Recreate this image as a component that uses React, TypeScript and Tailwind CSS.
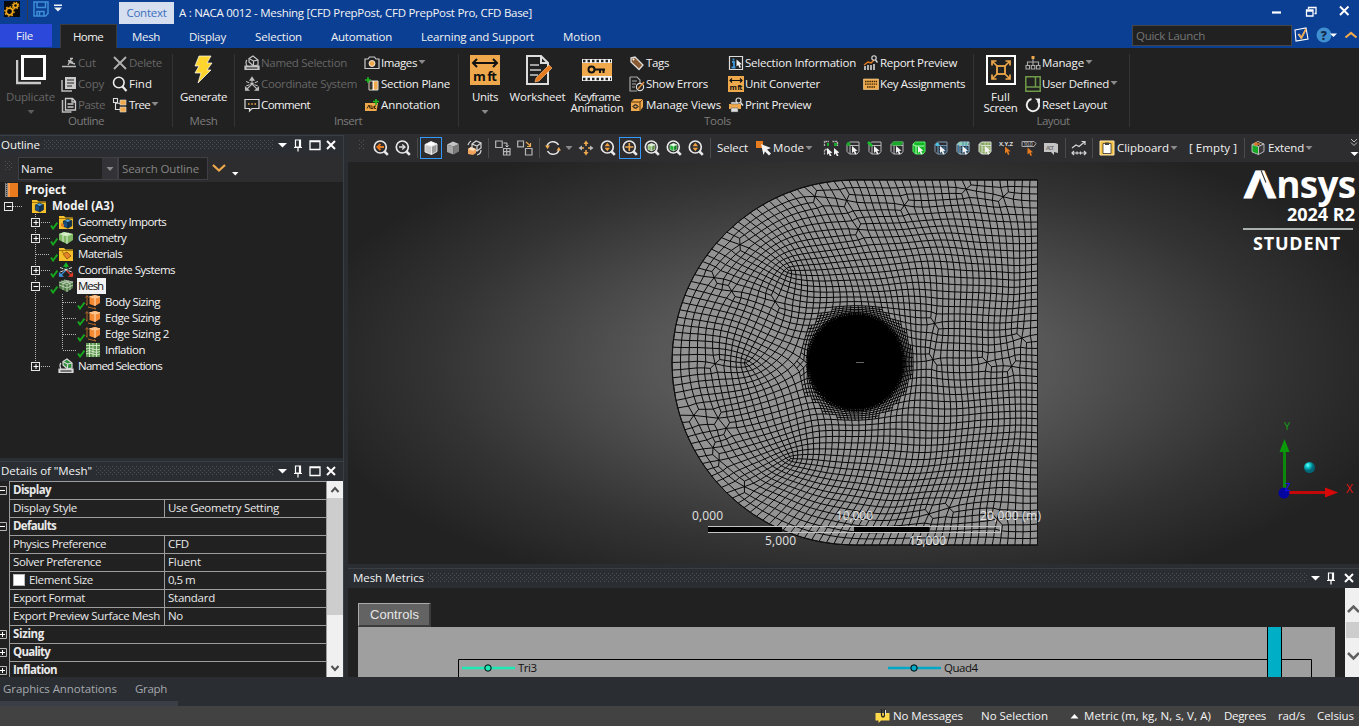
import { useLayoutEffect, useRef, useState, type ReactNode } from "react";

/* ---------- text that is tracked to a given advance width ---------- */
function T({ w, children, className = "" }: { w: number; children: string; className?: string }) {
  const ref = useRef<HTMLSpanElement>(null);
  const [track, setTrack] = useState(0);
  useLayoutEffect(() => {
    const el = ref.current;
    if (!el) return;
    el.style.letterSpacing = "0px";
    const natural = el.getBoundingClientRect().width;
    const next = (w - natural) / children.length;
    el.style.letterSpacing = `${next}px`;
    setTrack(next);
  }, [w, children]);
  return (
    <span ref={ref} className={`inline-block shrink-0 whitespace-nowrap ${className}`} style={{ letterSpacing: `${track}px` }}>
      {children}
    </span>
  );
}

function Ico({ children, size = 16, className = "" }: { children: ReactNode; size?: number; className?: string }) {
  return (
    <svg width={size} height={size} viewBox="0 0 16 16" fill="none" className={`shrink-0 ${className}`}>
      {children}
    </svg>
  );
}

const Caret = ({ className = "", color = "#8a8a8a" }: { className?: string; color?: string }) => (
  <svg width="8" height="4" viewBox="0 0 8 4" className={`shrink-0 ${className}`}>
    <path d="M0.5 0h7L4 4z" fill={color} />
  </svg>
);

function Grip({ className = "" }: { className?: string }) {
  return (
    <svg className={className} height="9" width="100%">
      <defs>
        <pattern id="grip-dots" width="4" height="4" patternUnits="userSpaceOnUse">
          <rect width="1" height="1" fill="#4d5258" />
          <rect x="2" y="2" width="1" height="1" fill="#4d5258" />
        </pattern>
      </defs>
      <rect width="100%" height="9" fill="url(#grip-dots)" />
    </svg>
  );
}

/* ---------- icons ---------- */
const Cube = ({ t, l, r, s = "none" }: { t: string; l: string; r: string; s?: string }) => (
  <g stroke={s} strokeWidth="0.9" strokeLinejoin="round">
    <path d="M8 1.500 14 4 8.500 6.500 2 4.500z" fill={t} />
    <path d="M2 4.500 8.500 6.500V14.500L2 12z" fill={l} />
    <path d="M8.500 6.500 14 4V11.500L8.500 14.500z" fill={r} />
  </g>
);
const Mag = ({ children }: { children?: ReactNode }) => (
  <g>
    <circle cx="7.300" cy="7" r="6" stroke="#e8e8e8" strokeWidth="1.700" />
    <path d="m11.500 11.500 3.300 3.300" stroke="#e8e8e8" strokeWidth="2.600" />
    {children}
  </g>
);
const Pointer = ({ x = 8, y = 7, c = "#f2f2f2" }: { x?: number; y?: number; c?: string }) => (
  <path transform={`translate(${x} ${y})`} d="M0 0v7l1.700-1.500 1.300 3 1.500-.7-1.300-2.800 2.300-.2z" fill={c} />
);
const OpenBox = ({ s = "#b8b8b8" }: { s?: string }) => (
  <path d="M2 4.500 4.500 2H14v9.500L12 14H4.500L2 11.500zM2 4.500l3 1h9M5 5.500V14" stroke={s} strokeWidth="1" />
);
const Updown = () => <path d="M7.300 2.800 10 6.200H4.600zM7.300 11.200 10 7.800H4.600z" fill="#f0a040" />;

const NamedSel = ({ c = "none" }: { c?: string }) => (
  <g stroke="#d8d8d8" strokeWidth="1.200">
    <path d="M5 3.500 9 1l5 4v5L9.500 11 5 7z" fill={c} />
    <path d="M5 3.500 9.500 6v5M9.500 6 14 5M3 5C1 7 2 9 3 11" />
    <path d="M1 11h14v3.500H1z" fill="#d8d8d8" />
    <path d="M2.500 13h11" stroke="#333" />
  </g>
);
const Folder = ({ children }: { children?: ReactNode }) => (
  <g>
    <path d="M1 2h5l1.500 1.500H15V15H1z" fill="#f5c02c" />
    <path d="M1 4.500h14" stroke="#8a6500" strokeWidth=".8" />
    {children}
  </g>
);
const Star = ({ colors }: { colors: [string, string, string] }) => (
  <g strokeWidth="1.100">
    <path d="M8 7.500V3M6 4.200 8 1.200l2 3z" stroke={colors[0]} fill={colors[0]} />
    <path d="M8 8 3.500 12.500M1.500 11.200V14.300h3.200z" stroke={colors[1]} fill={colors[1]} />
    <path d="M8 8l4.500 4.500M14.500 11.200V14.300h-3.200z" stroke={colors[2]} fill={colors[2]} />
    <path d="M2 5.500 14 10M14 5.500 2 10" stroke="#ddd" strokeWidth="1" strokeDasharray="3.500 1" />
  </g>
);
const SizingIcon = () => (
  <g>
    <path d="M4.500 2.500 10 1l5 1.500V9l-5 3-5.500-2z" fill="#f58a35" />
    <path d="M4.500 2.500 10 4l5-1.500M10 4v8" stroke="#ffe0c0" strokeWidth="1" />
    <path d="M4.500 2.500 10 1l5 1.500L10 4z" fill="#ffc38a" />
    <path d="M2 2v9M.5 3.500 2 1.500l1.500 2M1 9.500l1 2M3 13l8 2M9 13.500l2 1.500" stroke="#b5672a" strokeWidth="1" />
  </g>
);

/* ---------- ribbon ---------- */
function Small({ icon, w, dim, caret, children }: { icon: ReactNode; w: number; dim?: boolean; caret?: boolean; children: string }) {
  return (
    <div className="flex h-[21px] items-center">
      <Ico className={dim ? "mr-px opacity-90" : "mr-px"}>{icon}</Ico>
      <T w={w} className={dim ? "text-[#666]" : "text-[#f1f1f1]"}>{children}</T>
      {caret && <Caret className="-mt-0.5 ml-px" />}
    </div>
  );
}
function Group({ label, lw, className, shift = "", children }: { label: string; lw: number; className: string; shift?: string; children: ReactNode }) {
  return (
    <div className={`flex h-[86px] shrink-0 flex-col pt-1 ${className}`}>
      <div className="flex h-[63px]">{children}</div>
      <div className={`flex h-3 items-center justify-center text-[#7c7c7c] ${shift}`}><T w={lw}>{label}</T></div>
    </div>
  );
}
const Sep = () => <div className="mt-1.5 h-[73px] w-px shrink-0 bg-[#343434]" />;

function Big({ icon, className, children }: { icon: ReactNode; className: string; children: ReactNode }) {
  return (
    <div className={`flex shrink-0 flex-col items-center pt-[3px] leading-[11px] ${className}`}>
      <svg width="30" height="30" viewBox="0 0 30 30" fill="none" className="mb-1.5">{icon}</svg>
      {children}
    </div>
  );
}

function Ribbon() {
  return (
    <div className="flex h-[86px] shrink-0 bg-[#212121]">
      <Group label="Outline" lw={36} className="w-[172px]">
        <Big className="w-[61px] text-[#666]" icon={<><path d="M1 5v23h24" stroke="#c9c9c9" strokeWidth="2.500" /><rect x="6.500" y="1.500" width="22" height="22" stroke="#fff" strokeWidth="3" fill="#212121" /></>}>
          <T w={49}>Duplicate</T><Caret className="mt-2" color="#5c5c5c" />
        </Big>
        <div className="w-[51px]">
          <Small dim w={18} icon={<path d="M1 11.500h14M7 10 11 3m-3.500 4L14 9M7 5.500l5 2M9 3.500h3" stroke="#ccc" strokeWidth="1.400" />}>Cut</Small>
          <Small dim w={26} icon={<><path d="M1 4v11h10" stroke="#ccc" strokeWidth="1.500" /><path d="M4 1h11v12H4z" fill="#ddd" /><path d="M6 4h7M6 7h7M6 10h5" stroke="#222" /></>}>Copy</Small>
          <Small dim w={27} icon={<><path d="M1.500 3v12h9" stroke="#ccc" strokeWidth="1.500" /><path d="M4.500 1.500h7l3 3v8.500h-10zM11 2v3h3M6.500 7h6M6.500 10h6" stroke="#ddd" strokeWidth="1.300" /></>}>Paste</Small>
        </div>
        <div>
          <Small dim w={33} icon={<path d="m2 2 12 12M14 2 2 14" stroke="#c0c0c0" strokeWidth="1.900" />}>Delete</Small>
          <Small w={23} icon={<><circle cx="6.800" cy="6.500" r="5.300" stroke="#eee" strokeWidth="1.600" /><path d="m10.500 10.500 4 4.500" stroke="#eee" strokeWidth="2.200" /></>}>Find</Small>
          <Small w={21} caret icon={<><path d="M1.500 1.500h4v4h-4zM3.500 6v6.500H8M3.500 6 9 6.500" stroke="#ddd" strokeWidth="1.100" /><path d="M8 3h6v5H8zM8 10h6v5H8z" fill="#efa94c" stroke="#ddd" strokeWidth=".6" /></>}>Tree</Small>
        </div>
      </Group>
      <Sep />
      <Group label="Mesh" lw={28} className="w-[61px]">
        <Big className="w-[61px] text-[#f1f1f1]" icon={<path d="M10 1h12l-4 7h5l-5 7h4L9 28l3-10H6l4-7H6z" fill="#ffd52e" stroke="#fff" strokeWidth=".7" />}>
          <T w={47}>Generate</T>
        </Big>
      </Group>
      <Sep />
      <Group label="Insert" lw={28} className="w-[223px]" shift="pl-[3px]">
        <div className="ml-[9px] w-[120px]">
          <Small dim w={86} icon={<NamedSel />}>Named Selection</Small>
          <Small dim w={96} icon={<Star colors={["#ccc", "#ccc", "#ccc"]} />}>Coordinate System</Small>
          <Small w={49} icon={<><path d="M1 2.500h14v9H8L5.500 14v-2.500H1z" stroke="#ddd" strokeWidth="1.200" /><path d="M4 7h1.500M7.300 7h1.500M10.500 7H12" stroke="#efa94c" strokeWidth="1.500" /></>}>Comment</Small>
        </div>
        <div>
          <Small w={36} caret icon={<><path d="M1 4h3l1.500-2h5L12 4h3v9.500H1z" stroke="#ccc" strokeWidth="1.200" /><circle cx="8" cy="8.500" r="3" fill="#efa94c" stroke="#fff" strokeWidth=".8" /></>}>Images</Small>
          <Small w={69} icon={<><path d="M5 5h9v9H5z" fill="#efa94c" stroke="#ddd" /><path d="M9 5v9" stroke="#fff" strokeWidth="1.500" /><path d="M5.500 5.500h3v8h-3z" fill="#333" /><path d="M4 1v6M1 4h6" stroke="#1fbb1f" strokeWidth="1.500" /></>}>Section Plane</Small>
          <Small w={59} icon={<><path d="M1 6h13l-1.500 8H1z" fill="#efa94c" /><path d="M12 2v6M9 4.500h6" stroke="#1fbb1f" strokeWidth="1.600" /><path d="M3 11.500 5 8l1 3.500M7 8v3.500h2V9M12 9h-1.500v2.500H12" stroke="#3a2405" strokeWidth="1" /></>}>Annotation</Small>
        </div>
      </Group>
      <Sep />
      <Group label="Tools" lw={27} className="w-[514px]" shift="pl-[3px]">
        <Big className="w-[52px] text-[#f1f1f1]" icon={<><path d="M0 0h30v30H0z" fill="#efa94c" /><path d="M3 8h24M7 4 3 8l4 4M23 4l4 4-4 4" stroke="#111" strokeWidth="2" /><text x="3" y="26" fontSize="13" fontWeight="700" fill="#111" textLength="24">m ft</text></>}>
          <T w={26}>Units</T><Caret className="mt-2" />
        </Big>
        <Big className="w-[53px] text-[#f1f1f1]" icon={<><path d="M4 1h14l7 7v21H4zM18 1v7h7" stroke="#ddd" strokeWidth="2" /><path d="M7 10h9M7 15h11M7 20h8" stroke="#ccc" strokeWidth="1.500" /><path d="m12 27 1-4L26 10l3 3-13 13z" fill="#e67b20" stroke="#ffc48a" strokeWidth=".6" /></>}>
          <T w={56}>Worksheet</T>
        </Big>
        <Big className="w-[66px] text-[#f1f1f1]" icon={<><path d="M0 4h30v22H0z" fill="#f4f4f4" /><path d="M0 8h30v13H0z" fill="#efa94c" /><path d="M1 6h28M1 24h28" stroke="#212121" strokeWidth="2.500" strokeDasharray="2.500 2" /><circle cx="9.500" cy="14.500" r="3" stroke="#111" strokeWidth="2" /><path d="M12 14.500h11M18 14.500V18M21.500 14.500V18" stroke="#111" strokeWidth="2" /></>}>
          <T w={46}>Keyframe</T><T w={53}>Animation</T>
        </Big>
        <div className="-ml-px w-[99px]">
          <Small w={23} icon={<><path d="m2 3 4-1 8 8-4 4.500L2 7z" fill="#8a5a30" stroke="#ddd" strokeWidth="1.300" /><circle cx="4.500" cy="4.500" r="1" fill="#fff" /></>}>Tags</Small>
          <Small w={62} icon={<><path d="M1 1h7l3 3v3M1 1v14h7M3 5h5M3 8h4M3 11h3" stroke="#aaa" strokeWidth="1.200" /><circle cx="11" cy="11" r="3.600" stroke="#ddd" strokeWidth="1.200" /><path d="m9 13 6-7" stroke="#d98a3a" strokeWidth="1.500" /></>}>Show Errors</Small>
          <Small w={75} icon={<><path d="M2 5 5 2h9v8l-3 4H2z" fill="#efa94c" /><path d="M2 5h9v9M11 5l3-3" stroke="#5b3408" /><circle cx="6.500" cy="9.500" r="1.600" stroke="#222" /><path d="M3.500 9.500q3-3.500 6 0-3 3.500-6 0z" stroke="#222" strokeWidth=".8" /></>}>Manage Views</Small>
        </div>
        <div className="w-[135px]">
          <Small w={111} icon={<><path d="M1.500 1.500h13v13h-13z" stroke="#ddd" strokeWidth="1.200" /><path d="M5.500 3.500v2M4 7h2v5M3.500 12.500h4" stroke="#3f95d8" strokeWidth="1.800" /><Pointer x={8.500} y={4.500} /></>}>Selection Information</Small>
          <Small w={75} icon={<><path d="M0 0h16v16H0z" fill="#efa94c" /><path d="M2 4.500h12M4 2.500l-2 2 2 2M12 2.500l2 2-2 2" stroke="#111" strokeWidth="1.200" /><text x="1.500" y="14" fontSize="7.500" fontWeight="700" fill="#111" textLength="13">m ft</text></>}>Unit Converter</Small>
          <Small w={66} icon={<><path d="M1 7h12v5H1z" fill="#efa94c" /><path d="M3 5h7v2H3zM3 11h7v4H3z" fill="#ddd" stroke="#555" strokeWidth=".5" /><circle cx="10.500" cy="3.500" r="2.500" stroke="#ddd" strokeWidth="1.200" /><path d="m12.500 5.500 2.500 3" stroke="#ddd" strokeWidth="1.500" /></>}>Print Preview</Small>
        </div>
        <div>
          <Small w={77} icon={<><path d="M2 15v-4M5 15v-5M8 15v-5M11 15V9" stroke="#ccc" strokeWidth="1.700" /><path d="m1 10 4-3 3 1 3-3" stroke="#e67b20" strokeWidth="1.400" /><circle cx="11" cy="3" r="2.200" stroke="#ddd" strokeWidth="1.100" /><path d="m12.500 5 2 2.500" stroke="#ddd" strokeWidth="1.300" /></>}>Report Preview</Small>
          <Small w={85} icon={<><path d="M.5 3h15v10.500H.5z" fill="#efa94c" stroke="#ffd79a" strokeWidth=".6" /><path d="M2 5.500h12M2 8.200h12M4 11h8" stroke="#3a2405" strokeWidth="1.300" strokeDasharray="1.500 .7" /></>}>Key Assignments</Small>
        </div>
      </Group>
      <Sep />
      <Group label="Layout" lw={33} className="w-[155px]" shift="pl-[3px]">
        <Big className="ml-px w-[51px] text-[#f1f1f1]" icon={<><rect x="1" y="1" width="28" height="28" stroke="#fff" strokeWidth="2" /><rect x="11" y="11" width="8" height="8" stroke="#efa94c" strokeWidth="1.800" /><path d="m11 11-4-4M19 11l4-4M11 19l-4 4M19 19l4 4M6 10.500V6h4.500M19.500 6H24v4.500M6 19.500V24h4.500M19.500 24H24v-4.500" stroke="#efa94c" strokeWidth="1.700" /></>}>
          <T w={19}>Full</T><T w={34}>Screen</T>
        </Big>
        <div className="-ml-px">
          <Small w={42} caret icon={<><path d="M6.500 1h3v3h-3z" fill="#efa94c" /><path d="M8 4v6M2.500 10V7h11v3M1 10.500h3.500V14H1zM6.300 10.500h3.500V14H6.300zM11.500 10.500H15V14h-3.500z" stroke="#aaa" strokeWidth="1.100" /></>}>Manage</Small>
          <Small w={67} caret icon={<path d="M.8.8h14.400v14.400H.8zM.8 11h14.400M10.500.8V11" stroke="#6f9a48" strokeWidth="1.500" />}>User Defined</Small>
          <Small w={65} icon={<><path d="M6.500 2A6.200 6.200 0 1 0 12.700 4" stroke="#eee" strokeWidth="1.900" /><path d="M10 1.500h5v5z" fill="#eee" /></>}>Reset Layout</Small>
        </div>
      </Group>
      <Sep />
    </div>
  );
}

/* ---------- title and tab bars ---------- */
function TitleBar() {
  return (
    <div className="shrink-0 bg-[#0b3f94]">
      <div className="flex h-6 items-start">
        <svg width="16" height="16" viewBox="0 0 16 16" fill="none" className="ml-1 mt-px">
          <path d="M0 0h16v16H0z" fill="#0a0a0a" />
          <circle cx="5.500" cy="10.500" r="3.300" stroke="#eda81c" strokeWidth="1.800" /><circle cx="5.500" cy="10.500" r="4.700" stroke="#eda81c" strokeWidth="1.300" strokeDasharray="1.700 1.900" />
          <circle cx="11.500" cy="4.500" r="2.100" stroke="#eda81c" strokeWidth="1.500" /><circle cx="11.500" cy="4.500" r="3.300" stroke="#eda81c" strokeWidth="1.100" strokeDasharray="1.300 1.300" />
        </svg>
        <div className="ml-[7px] h-[21px] w-px bg-[#333a4c]" />
        <svg width="16" height="16" viewBox="0 0 16 16" fill="none" className="ml-[5px] mt-px">
          <path d="M1 1h14v11.500L12.500 15H1zM4 1v5.500h8.500V1M4 15v-4.500h7V15M6.500 11v4" stroke="#3f8fd6" strokeWidth="1.500" />
        </svg>
        <svg width="8" height="8" viewBox="0 0 8 8" className="ml-[5px] mt-1"><path d="M0 .5h8V2H0zM0 3.500h8L4 7.500z" fill="#f4f4f4" /></svg>
        <div className="ml-[57px] mt-0.5 flex h-[22px] w-[55px] items-center justify-center bg-[#d5dff0] text-[#3d70bd]"><T w={40}>Context</T></div>
        <T w={353} className="ml-[5px] mt-[5px] leading-4 text-[#f4f4f4]">A : NACA 0012 - Meshing [CFD PrepPost, CFD PrepPost Pro, CFD Base]</T>
        <svg width="86" height="20" viewBox="0 0 86 20" fill="none" className="ml-auto mr-[2px] mt-px">
          <path d="M1 11.500h9" stroke="#fff" strokeWidth="2.200" />
          <path d="M37.500 8V6.500h7.500v6h-1.500M35.500 9h6.500v6h-6.500zM35.500 10h6.500" stroke="#fff" strokeWidth="1.300" />
          <path d="m69 5.500 8.500 8.500M77.500 5.500 69 14" stroke="#fff" strokeWidth="2" />
        </svg>
      </div>
      <div className="flex h-6 text-[#f1f1f1] [&>span]:mt-1 [&>span]:leading-[17px]">
        <div className="flex h-[23px] w-[52px] items-center bg-[#2b48da] pl-4"><T w={17}>File</T></div>
        <div className="ml-2 flex h-6 w-[57px] items-center border-x border-t border-[#3c3c3c] bg-[#212121] pl-3"><T w={30}>Home</T></div>
        <T w={28} className="ml-[15px]">Mesh</T>
        <T w={37} className="ml-[29px]">Display</T>
        <T w={47} className="ml-[29px]">Selection</T>
        <T w={61} className="ml-[29px]">Automation</T>
        <T w={113} className="ml-[29px]">Learning and Support</T>
        <T w={38} className="ml-[29px]">Motion</T>
        <div className="ml-auto mt-px flex h-[21px] w-[160px] items-center border border-[#454545] bg-[#212121] pl-[3px] text-[#757575]"><T w={69}>Quick Launch</T></div>
        <svg width="67" height="22" viewBox="0 0 67 22" fill="none">
          <path d="m3 6 11-2 2 11-12 2zM6 10l3 4 5-9" stroke="#fff" strokeWidth="1.100" />
          <path d="m7 10 2.500 4L14 5" stroke="#efa94c" strokeWidth="1.700" />
          <circle cx="32" cy="11" r="7.500" fill="#3f8fd0" />
          <text x="28.700" y="15.500" fontSize="12" fontWeight="800" fill="#132a4a">?</text>
          <path d="M38 9.500h7l-3.500 3.500z" fill="#fff" />
          <path d="m53.500 13.500 5.500-4.500 5.500 4.500" stroke="#efa94c" strokeWidth="2.200" />
        </svg>
      </div>
    </div>
  );
}

/* ---------- docked panels ---------- */
function PanelHeader({ title, w, max = true, className = "" }: { title: string; w: number; max?: boolean; className?: string }) {
  return (
    <div className={`flex h-5 shrink-0 items-center border-t border-[#3a3e45] bg-[#2a2d32] pb-0.5 text-[#f4f4f4] ${className}`}>
      <T w={w}>{title}</T>
      <div className="ml-1 mr-1 h-[9px] min-w-0 flex-1 overflow-hidden"><Grip /></div>
      <svg width={max ? 65 : 48} height="16" viewBox={max ? "0 0 65 16" : "0 0 48 16"} fill="none" className="shrink-0">
        <path d="M0 6h9L4.500 10.500z" fill="#fff" />
        <path d="M17.500 3h5v7h-5zM16 10.500h8M20 10.500V14.500M21.500 3v7" stroke="#fff" strokeWidth="1.200" />
        {max && <path d="M32 4h10v8.500H32zM32 4.500h10" stroke="#fff" strokeWidth="1.300" />}
        <path transform={max ? "translate(49 0)" : "translate(34 0)"} d="m0 4 8 8M8 4 0 12" stroke="#fff" strokeWidth="2" />
      </svg>
    </div>
  );
}

type Node = { label: string; w: number; level: number; icon: ReactNode; box?: "+" | "-"; check?: boolean; bold?: boolean; hot?: boolean; line?: string };
const V1 = "M35.5 0V16";
const tree: Node[] = [
  { label: "Project", w: 41, level: -1, bold: true, icon: <><path d="M3 1h11v14H3z" fill="#ea7a1e" /><path d="M1 1h3v14H1z" fill="#8a8a8a" /><path d="M2.500 1v14" stroke="#333" strokeDasharray="1 1" /><path d="M5 1v14" stroke="#ffbd80" /></> },
  { label: "Model (A3)", w: 62, level: 0, bold: true, box: "-", line: "M13 8.5H23", icon: <Folder><g transform="translate(3 4) scale(.68)"><Cube t="#4ba5e8" l="#184f86" r="#0f3358" s="#0a2038" /></g></Folder> },
  { label: "Geometry Imports", w: 88, level: 1, box: "+", check: true, line: V1 + "M41 8.5H50", icon: <Folder><g transform="translate(4 4) scale(.7)"><Cube t="#4ba5e8" l="#184f86" r="#0f3358" s="#0a2038" /></g><path d="M3 9v3l3 1.500v-3z" fill="#d97a25" /></Folder> },
  { label: "Geometry", w: 48, level: 1, box: "+", check: true, line: V1 + "M41 8.5H50", icon: <><path d="M1 4 6 2l9 2v6l-6 4-8-4z" fill="#7fb765" /><path d="M1 4l8 2.500L15 4 6 2z" fill="#c9ebba" /><path d="M9 6.500V14M5 5.300V12M5 5.300 11 3" stroke="#e8f5e0" strokeWidth=".9" /></> },
  { label: "Materials", w: 44, level: 1, check: true, line: V1 + "M36 8.5H50", icon: <Folder><path d="m5 8 4-2 4 4-4 3z" fill="#e5822a" stroke="#7a4208" strokeWidth=".7" /><path d="m4 5 3 5" stroke="#ba8010" strokeWidth="1.200" /></Folder> },
  { label: "Coordinate Systems", w: 97, level: 1, box: "+", check: true, line: V1 + "M41 8.5H50", icon: <Star colors={["#15b52a", "#3e94dc", "#e23a2a"]} /> },
  { label: "Mesh", w: 25, level: 1, box: "-", check: true, hot: true, line: V1 + "M41 8.5H50", icon: <><path d="M1 4 6 2l9 2v6l-6 4-8-4z" fill="#4f7a45" /><path d="M1 4l8 2.500L15 4M1 7l8 3 6-3M9 6.500V14M5 5.300V12M12 5v7M5 5.300 11 3M3 3l9 2M6 2l9 2" stroke="#cfe0c8" strokeWidth=".8" /></> },
  { label: "Body Sizing", w: 55, level: 2, check: true, line: V1 + "M62.5 0V16M63 8.5H77", icon: <SizingIcon /> },
  { label: "Edge Sizing", w: 55, level: 2, check: true, line: V1 + "M62.5 0V16M63 8.5H77", icon: <SizingIcon /> },
  { label: "Edge Sizing 2", w: 64, level: 2, check: true, line: V1 + "M62.5 0V16M63 8.5H77", icon: <SizingIcon /> },
  { label: "Inflation", w: 40, level: 2, check: true, line: V1 + "M62.5 0V8M63 8.5H77", icon: <><path d="M1 1h14v14H1z" fill="#5d9450" /><path d="M1 3.500h14M1 7q3.500-2 7 0t7 0M1 9.500q3.500-2 7 0t7 0M1 12q3.500-2 7 0t7 0M4.500 1v14M8 1v14M11.500 1v14" stroke="#d5ecca" strokeWidth=".9" /></> },
  { label: "Named Selections", w: 84, level: 1, box: "+", line: "M35.5 0V8M41 8.5H50", icon: <NamedSel c="#2f8f3a" /> },
];

function TreeRow({ n }: { n: Node }) {
  const gutter = [4, 31, 58, 85][n.level + 1];
  const bx = n.level === 0 ? 8.5 : 35.5;
  return (
    <div className="flex h-4 items-center">
      <svg height="16" width={gutter} viewBox={`0 0 ${gutter} 16`} fill="none" className="shrink-0">
        {n.line && <path d={n.line} stroke="#b5b5b5" strokeDasharray="1 1" />}
        {n.box && <><rect x={bx - 4} y="4.500" width="8" height="8" fill="#212121" stroke="#e4e4e4" /><path d={n.box === "+" ? `M${bx - 2} 8.500h5M${bx + 0.5} 6v5` : `M${bx - 2} 8.500h5`} stroke="#fff" /></>}
        {n.check && <path d={`M${gutter - 7} 11.500l2 3 4.500-6`} stroke="#16a51c" strokeWidth="2" />}
      </svg>
      <Ico>{n.icon}</Ico>
      <div className={`flex h-4 items-center ${n.level < 1 ? "ml-[5px]" : "ml-[3px] px-px"} ${n.hot ? "bg-[#f2f2f2] pr-[3px] text-[#111]" : "text-[#f4f4f4]"}`}>
        <T w={n.w} className={n.bold ? "font-bold" : ""}>{n.label}</T>
      </div>
    </div>
  );
}

type Prop = [string, number, string?, number?, ("+" | "-" | "check")?];
const props: Prop[] = [
  ["Display", 38, undefined, undefined, "-"],
  ["Display Style", 64, "Use Geometry Setting", 111],
  ["Defaults", 43, undefined, undefined, "-"],
  ["Physics Preference", 93, "CFD", 21],
  ["Solver Preference", 88, "Fluent", 33],
  ["Element Size", 64, "0,5 m", 27, "check"],
  ["Export Format", 72, "Standard", 47],
  ["Export Preview Surface Mesh", 147, "No", 15],
  ["Sizing", 31, undefined, undefined, "+"],
  ["Quality", 37, undefined, undefined, "+"],
  ["Inflation", 44, undefined, undefined, "+"],
];

function LeftDock() {
  return (
    <div className="flex w-[348px] shrink-0 flex-col bg-[#2a2d32]">
      <div className="flex w-[344px] flex-1 flex-col border-r border-[#3a3e45]">
        <PanelHeader title="Outline" w={39} className="pl-px" />
        <div className="flex h-[27px] shrink-0 items-center bg-[#2d2d30]">
          <div className="mx-[5px] h-4 w-2 overflow-hidden"><Grip /></div>
          <div className="flex h-[23px] w-[100px] items-center justify-between border border-[#3f3f46] bg-[#212121] pl-[2px] text-[#f1f1f1]">
            <T w={32}>Name</T>
            <div className="flex h-full w-[15px] items-center justify-center bg-[#333337]"><Caret /></div>
          </div>
          <div className="flex h-[23px] w-[90px] items-center border border-[#3f3f46] bg-[#212121] pl-[3px] text-[#858585]"><T w={77}>Search Outline</T></div>
          <svg width="34" height="20" viewBox="0 0 34 20" fill="none"><path d="m5 6 6 5.500L17 6" stroke="#efa94c" strokeWidth="2.200" /><path d="M24 13h6.500l-3.200 3.500z" fill="#fff" /></svg>
        </div>
        <div className="h-[276px] shrink-0 bg-[#212121]">{tree.map((n) => <TreeRow key={n.label} n={n} />)}</div>
        <div className="h-[3px] shrink-0" />
        <PanelHeader title={'Details of "Mesh"'} w={91} className="pl-px" />
        <div className="flex h-[196px] shrink-0 bg-[#212121]">
          <div className="w-[327px] overflow-hidden">
            {props.map(([name, w, val, vw, mark]) => (
              <div key={name} className="flex h-[18px]">
                <div className="flex w-[9px] shrink-0 items-center">
                  {(mark === "+" || mark === "-") && (
                    <svg width="8" height="9" viewBox="0 0 8 9" fill="none"><path d="M0 .5h6.500v8H0" stroke="#b5b5b5" /><path d={mark === "+" ? "M0 4.500h5M2.500 2v5" : "M0 4.500h5"} stroke="#fff" /></svg>
                  )}
                </div>
                <div className="flex flex-1 border-l border-t border-r border-[#9c9c9c] text-[#e9e9e9]">
                  <div className={`flex items-center pl-[3px] ${val ? "w-[155px] border-r border-[#9c9c9c] pb-0.5" : "flex-1 pb-px font-bold"}`}>
                    {mark === "check" && <div className="mr-1 mt-px h-3 w-3 border border-[#bbb] bg-white" />}
                    <T w={w}>{name}</T>
                  </div>
                  {val && <div className="flex flex-1 items-center pb-0.5 pl-[3px]"><T w={vw ?? 0}>{val}</T></div>}
                </div>
              </div>
            ))}
          </div>
          <div className="flex flex-1 flex-col bg-[#f0f0f0]">
            <svg width="16" height="17" viewBox="0 0 16 17" fill="none"><path d="m4.500 11 3.500-4 3.500 4" stroke="#505050" strokeWidth="2" /></svg>
            <div className="h-[117px] w-4 bg-[#cdcdcd]" />
            <svg width="16" height="17" viewBox="0 0 16 17" fill="none" className="mt-auto"><path d="m4.500 6 3.500 4 3.500-4" stroke="#505050" strokeWidth="2" /></svg>
          </div>
        </div>
      </div>
    </div>
  );
}

/* ---------- graphics toolbar ---------- */
function Btn({ children, on }: { children: ReactNode; on?: boolean }) {
  return (
    <div className={`flex h-[22px] w-[22px] shrink-0 items-center justify-center ${on ? "border border-[#3399ff]" : ""}`}>
      <Ico>{children}</Ico>
    </div>
  );
}
const TSep = ({ className }: { className: string }) => <div className={`h-5 w-px shrink-0 bg-[#4a4a4d] ${className}`} />;

function GraphicsBar() {
  return (
    <div className="flex h-[27px] shrink-0 items-center bg-[#2d2d30] pb-0.5 text-[#f1f1f1]">
      <div className="ml-[11px] mr-[5px] h-4 w-1.5 overflow-hidden"><Grip /></div>
      <Btn><Mag><path d="M11 7H5M7.500 4 4.300 7l3.200 3" stroke="#e87a20" strokeWidth="1.800" /></Mag></Btn>
      <Btn><Mag><path d="M4 7h6M7.200 4.500 10 7 7.200 9.500" stroke="#ddd" strokeWidth="1.300" /></Mag></Btn>
      <TSep className="ml-[3px] mr-[2px]" />
      <Btn on><Cube t="#fff" l="#c8c8c8" r="#9a9a9a" s="#eee" /></Btn>
      <Btn><Cube t="#c4c4c4" l="#a5a5a5" r="#7c7c7c" /></Btn>
      <Btn><path d="M5 4 9 1l5 2v5l-4 3-5-2zM5 4l5 2 4-3M10 6v5M14 10q0 4-4 5M1 5q1-3 3-4" stroke="#d5d5d5" strokeWidth="1.200" /><path d="m1 9 3-2 5 2v4l-3 2-5-1z" fill="#f2a35c" /><path d="m1 9 5 2 3-2-5-2z" fill="#ffe0bc" /></Btn>
      <TSep className="ml-[2px] mr-[3px]" />
      <Btn><path d="M.7 1h6.500v6.500H.7zM8.500 8.500H15V15H8.500zM11.700 8.500V15M8.500 11.700H15" stroke="#b5b5b5" strokeWidth="1.200" /><path d="M8.500 3h3.500v4M10.500 5.500 12 7l1.500-1.500" stroke="#ccc" /></Btn>
      <Btn><path d="M.7 1h5.800v5.800H.7zM8.500 8.500H15V15H8.500z" stroke="#b5b5b5" strokeWidth="1.200" /><path d="m9 2 4.500 4M13.500 3v3.500H10" stroke="#efa94c" strokeWidth="1.200" /></Btn>
      <TSep className="ml-[3px] mr-[2px]" />
      <Btn><path d="M2 6A6.300 6.300 0 0 1 13.500 5M14 10A6.300 6.300 0 0 1 2.500 11" stroke="#e2e2e2" strokeWidth="1.500" /><path d="M0 5.500h5L2.500 9zM11.500 10.500H16L13.800 7z" fill="#efa94c" /></Btn>
      <Caret className="ml-px mr-0.5" />
      <Btn><path d="M8 3v3M8 10v3M3 8h3M10 8h3" stroke="#efa94c" strokeWidth="1.500" /><path d="M8 .5 10.500 4h-5zM8 15.500 10.500 12h-5z" fill="#efa94c" /><path d="M.5 8 4 5.500v5zM15.500 8 12 5.500v5z" fill="#bbb" /></Btn>
      <Btn><Mag><Updown /></Mag></Btn>
      <Btn on><Mag><path d="M7.300 3v8M3.300 7h8" stroke="#efa94c" strokeWidth="1.600" /></Mag></Btn>
      <Btn><Mag><g transform="translate(2.800 2.500) scale(.58)"><Cube t="#d5f0c5" l="#8cbf70" r="#5c8f45" s="#fff" /></g></Mag></Btn>
      <Btn><Mag><g transform="translate(2.800 2.500) scale(.58)"><Cube t="#f0fff0" l="#20b535" r="#108020" s="#dfd" /></g></Mag></Btn>
      <Btn><Mag><Updown /></Mag></Btn>
      <TSep className="ml-[3px] mr-[6px]" />
      <T w={31}>Select</T>
      <Ico className="ml-2 mr-px"><path d="M0 1h7v7H0z" fill="#e67b20" /><path d="m5 4 10 4-4 1.500 4 4-2 2-4-4L7.500 15z" fill="#f4f4f4" /></Ico>
      <T w={31}>Mode</T>
      <Caret className="ml-px mr-[7px]" />
      <div className="flex">
        <Btn><path d="M1.500 6V1.500H6M9.500 1.500h5V6M1.500 14.500v-5H6" stroke="#b5b5b5" strokeDasharray="2 .7" strokeWidth="1.300" /><path d="M4 3h2v3H4zM11 3h3v3h-3z" fill="#19a82a" /><Pointer x={4} y={8} /><Pointer x={11} y={8} /></Btn>
        <Btn><OpenBox /><circle cx="3.500" cy="4" r="2" fill="#19a82a" /><Pointer x={7} y={6} /></Btn>
        <Btn><OpenBox /><path d="m1 2 4 4" stroke="#19c02a" strokeWidth="2.500" /><Pointer x={7} y={6} /></Btn>
        <Btn><OpenBox /><path d="M2 4.500 4.500 1.500H14.500L12 5.500H4z" fill="#19a82a" /><Pointer x={7} y={6} /></Btn>
        <Btn><path d="M2 4 4.500 2H14v9.500L12 14H4.500L2 11.500z" fill="#12b523" stroke="#59f06a" /><path d="M2 4.500 5 6h8M5 6v8" stroke="#b5ffbb" /><Pointer x={7} y={6} /></Btn>
        <Btn><OpenBox s="#7f9bb5" /><path d="M5 8h9M5 11h9M8 5v9M11 5v9" stroke="#3b74a5" strokeWidth=".8" /><circle cx="4.500" cy="4.500" r="1.800" fill="#48c0e0" /><Pointer x={7} y={6} /></Btn>
        <Btn><path d="M2 4 4.500 2H14l-1.500 4H5z" fill="#8fd0b0" /><OpenBox s="#a5c5d5" /><path d="M5 8h9M5 11h9M8 2v12M11 2v12M3.500 5v8" stroke="#3b84b5" strokeWidth=".9" /><Pointer x={7.500} y={6} /></Btn>
        <Btn><path d="M2 4 4.500 2H14v9.500L12 14H4.500L2 11.500z" fill="#86a860" /><OpenBox s="#ddd" /><path d="M5 8h9M5 11h9M8 2v12M11 2v12" stroke="#d5e0b5" strokeWidth=".7" /><Pointer x={8} y={6} /></Btn>
        <Btn><text x="0" y="5.500" fontSize="6" fontWeight="700" fill="#ddd" textLength="14">X,Y,Z</text><Pointer x={6} y={6.500} c="#e67b20" /></Btn>
        <Btn><path d="M1 1.500h12l2 2-2 3H1z" stroke="#aaa" /><text x="2.500" y="6" fontSize="5" fill="#ddd" textLength="9">10.0</text><Pointer x={6.500} y={7.500} c="#e67b20" /></Btn>
        <Btn><path d="M1 3h11l3 1v9l-4-1v3l-3-3H1z" fill="#c4c4c4" /><text x="3" y="9.500" fontSize="5.500" fontWeight="700" fill="#777" textLength="8">ACT</text></Btn>
      </div>
      <TSep className="ml-[3px] mr-[2px]" />
      <Btn><path d="m1 8 4-3 3 1.500L13.500 2M10.500 1.500H14V5M1 13h14M3 11l-2 2 2 2M13 11l2 2-2 2M6 11.500v3M9.500 11.500v3" stroke="#d5d5d5" strokeWidth="1.200" /></Btn>
      <TSep className="ml-[2px] mr-[3px]" />
      <Btn><path d="M1 1h14v14H1z" fill="#f5c242" stroke="#ffe7ae" /><path d="M4 3.500h8v10H4z" fill="#fff" stroke="#333" strokeWidth=".8" /><path d="M6 2.500h4v2.500H6z" fill="#444" /></Btn>
      <T w={52} className="-ml-px">Clipboard</T>
      <Caret className="ml-px" />
      <T w={48} className="ml-[11px]">[ Empty ]</T>
      <TSep className="ml-[7px] mr-[2px]" />
      <Btn><Cube t="#2d2d30" l="#15a825" r="#3a3a3d" s="#c5c5c5" /><path d="M6 2v4M4 4h6" stroke="#e67b20" strokeWidth="1.500" /></Btn>
      <T w={36} className="-ml-px">Extend</T>
      <Caret className="ml-px" />
      <svg width="9" height="22" viewBox="0 0 9 22" fill="none" className="ml-auto mr-0"><path d="m1 2 3 3 3-3M1 5.500l3 3 3-3" stroke="#bbb" /><path d="M.5 15h8l-4 4z" fill="#fff" /></svg>
    </div>
  );
}

/* ---------- finite element mesh ---------- */
type P = [number, number];
const R = 182.5;
const CX = 854.5;
const CY = 362.5;
const X1 = 1037.5;
const lerp = (a: P, b: P, t: number): P => [a[0] + (b[0] - a[0]) * t, a[1] + (b[1] - a[1]) * t];

function buildMesh(): string {
  const nodes: P[] = [];
  const index = new Map<string, number>();
  const quads: number[][] = [];
  const node = (p: P) => {
    const k = `${Math.round(p[0] * 8 + 0.013)},${Math.round(p[1] * 8 + 0.013)}`;
    let i = index.get(k);
    if (i === undefined) { i = nodes.length; nodes.push([p[0], p[1]]); index.set(k, i); }
    return i;
  };
  const patch = (nu: number, nv: number, b: (u: number) => P, t: (u: number) => P) => {
    const g: number[][] = [];
    for (let j = 0; j <= nv; j++) {
      g.push([]);
      for (let i = 0; i <= nu; i++) g[j].push(node(lerp(b(i / nu), t(i / nu), j / nv)));
    }
    for (let j = 0; j < nv; j++) for (let i = 0; i < nu; i++) quads.push([g[j][i], g[j][i + 1], g[j + 1][i + 1], g[j + 1][i]]);
  };
  const seg = (a: P, b: P) => (u: number) => lerp(a, b, u);
  const onArc = (a: number): P => [CX - R * Math.cos(a), CY - R * Math.sin(a)];
  const arc = (a0: number, a1: number) => (u: number) => onArc(a0 + (a1 - a0) * u);
  const S1: P = [798, 263], S2: P = [743, 362], S3: P = [798, 473];
  const R1: P = [X1, 264], R3: P = [X1, 461], C: P = [824, 362];
  const th = (48 * Math.PI) / 180;
  const arcLen = R * (Math.PI / 2 - th);
  const edge = (sign: number) => (u: number): P => {
    const s = u * (arcLen + X1 - CX);
    return s < arcLen ? onArc(sign * (th + s / R)) : [CX + s - arcLen, CY - sign * R];
  };
  patch(42, 12, edge(1), seg(S1, R1));
  patch(42, 12, edge(-1), seg(S3, R3));
  patch(20, 12, arc(0, th), seg(S2, S1));
  patch(20, 12, arc(0, -th), seg(S2, S3));
  const corners = [S2, S1, R1, R3, S3];
  const n = [6, 14, 36, 14, 6];
  const mid = corners.map((c, i) => lerp(c, corners[(i + 1) % 5], n[(i + 4) % 5] / (n[(i + 4) % 5] + n[(i + 1) % 5])));
  corners.forEach((c, i) => {
    const prev = (i + 4) % 5;
    patch(n[prev], n[i], seg(c, mid[i]), seg(mid[prev], C));
  });

  const fixed = nodes.map(([x, y]) => x > X1 - 0.5 || y < CY - R + 0.02 || y > CY + R - 0.02 || (x < CX && Math.hypot(x - CX, y - CY) > R - 0.1));
  [S2, C].forEach((p) => { fixed[node(p)] = true; });

  /* collapsed cells give the paving its irregular vertices */
  const seeds: P[] = [[850, 199], [905, 203], [967, 193], [1005, 200], [861, 223], [710, 278], [738, 245], [732, 292], [703, 367], [723, 460], [933, 323], [933, 362], [1021, 340], [953, 510], [743, 492], [985, 360], [1010, 363], [713, 423], [727, 427], [930, 518], [772, 300], [690, 415], [815, 200], [714, 445], [1000, 520]];
  const alias = nodes.map((_, i) => i);
  const used = new Set<number>();
  seeds.forEach(([sx, sy]) => {
    let best = -1, bd = 1e9;
    quads.forEach((q, i) => {
      if (q.some((k) => fixed[k] || used.has(k))) return;
      const d = Math.hypot((nodes[q[0]][0] + nodes[q[2]][0]) / 2 - sx, (nodes[q[0]][1] + nodes[q[2]][1]) / 2 - sy);
      if (d < bd) { bd = d; best = i; }
    });
    if (best < 0) return;
    const q = quads[best];
    q.forEach((k) => used.add(k));
    alias[q[0]] = q[2];
  });
  const cells = quads.map((q) => q.map((i) => alias[i])).filter((q) => q[0] !== q[2] && q[1] !== q[3]);

  const nb: Set<number>[] = nodes.map(() => new Set<number>());
  cells.forEach((q) => q.forEach((a, k) => { const b = q[(k + 1) % 4]; nb[a].add(b); nb[b].add(a); }));
  for (let it = 0; it < 45; it++) {
    nodes.forEach((p, i) => {
      if (fixed[i] || nb[i].size === 0) return;
      let x = 0, y = 0;
      nb[i].forEach((j) => { x += nodes[j][0]; y += nodes[j][1]; });
      p[0] = x / nb[i].size; p[1] = y / nb[i].size;
    });
  }

  const warped = nodes.map(([x, y]): P => {
    const edgeDist = Math.min(X1 - x, y - (CY - R), CY + R - y, x < CX ? R - Math.hypot(x - CX, y - CY) : 99);
    const k = Math.max(0, Math.min(1, edgeDist / 25));
    const px = x + k * (2 * Math.sin(y / 25 + x / 61) + 0.5 * Math.sin(y / 11 - x / 23));
    const py = y + k * (2.2 * Math.sin(x / 30 + y / 53) + 0.5 * Math.cos(x / 12 + y / 19));
    const dx = px - 855.5, dy = py - 362, r = Math.hypot(dx, dy);
    if (r > 84 || r < 0.01) return [px, py];
    const rr = 42 + (r * r * 42) / 7056;
    return [855.5 + (dx * rr) / r, 362 + (dy * rr) / r];
  });

  const out: string[] = [];
  const seen = new Set<string>();
  const f = (p: P) => `${p[0].toFixed(1)} ${p[1].toFixed(1)}`;
  cells.forEach((q) => {
    const [a, b, c, d] = q.map((i) => warped[i]);
    const r = Math.hypot((a[0] + c[0]) / 2 - 855.5, (a[1] + c[1]) / 2 - 362);
    if (r < 45) return;
    q.forEach((i, k) => {
      const j = q[(k + 1) % 4];
      const key = i < j ? `${i}-${j}` : `${j}-${i}`;
      if (!seen.has(key)) { seen.add(key); out.push(`M${f(warped[i])}L${f(warped[j])}`); }
    });
    const div = r < 58 ? 2 : 1;
    for (let s = 1; s < div; s++) {
      const t = s / div;
      out.push(`M${f(lerp(a, b, t))}L${f(lerp(d, c, t))}`, `M${f(lerp(a, d, t))}L${f(lerp(b, c, t))}`);
    }
  });
  return out.join("");
}
const meshPath = buildMesh();

function Viewport() {
  return (
    <div className="relative h-[402px] shrink-0 overflow-hidden bg-[#222]">
      <svg width="1011" height="402" viewBox="348 162 1011 402" fill="none" className="block">
        <defs>
          <radialGradient id="back" gradientUnits="userSpaceOnUse" cx="0" cy="0" r="1" gradientTransform="translate(853 362) scale(560 250)">
            <stop offset="0" stopColor="#636363" /><stop offset=".35" stopColor="#575757" /><stop offset=".75" stopColor="#333" /><stop offset="1" stopColor="#222" />
          </radialGradient>
          <radialGradient id="ball" cx=".35" cy=".3"><stop offset="0" stopColor="#7ff" /><stop offset=".4" stopColor="#10cdcd" /><stop offset="1" stopColor="#067" /></radialGradient>
        </defs>
        <rect x="348" y="162" width="1011" height="402" fill="url(#back)" />
        <path d="M854.500 180H1037.500V545H854.500A182.500 182.500 0 0 1 854.500 180z" fill="#939393" />
        <path d={meshPath} stroke="#000" strokeWidth=".95" />
        <path d="M854.500 180H1037.500V545H854.500A182.500 182.500 0 0 1 854.500 180z" stroke="#111" />
        <circle cx="855.500" cy="362" r="48" stroke="#000" strokeWidth="3.500" strokeDasharray="1.500 .8" />
        <circle cx="855.500" cy="362" r="47" fill="#000" />
        <path d="M856 362.500h8" stroke="#666" />

        <path d="M708 527h74v5h-74zM854 527h75v5h-75z" fill="#000" />
        <path d="M708 526.500h293M708 532.500h293M1000.500 526v7" stroke="#c5c5c5" strokeWidth="1.200" />
        <g fontSize="12" fill="#e2e2e2">
          <text x="692" y="520" textLength="31">0,000</text>
          <text x="836" y="520" textLength="37">10,000</text>
          <text x="980" y="520" textLength="61">20,000 (m)</text>
          <text x="765" y="545" textLength="31">5,000</text>
          <text x="909" y="545" textLength="37">15,000</text>
        </g>

        <path d="M1284.500 490V450" stroke="#0a8a0a" strokeWidth="3" /><path d="m1284.500 439 5 13h-10z" fill="#0a9a0a" />
        <path d="M1287 492.500h40" stroke="#c40808" strokeWidth="3" /><path d="m1338 492.500-13-5v10z" fill="#d80808" />
        <circle cx="1284" cy="493" r="5.500" fill="#0505a0" />
        <circle cx="1309.500" cy="467.500" r="5.500" fill="url(#ball)" />
        <text x="1284" y="430" fontSize="11" fill="#13a013">Y</text>
        <text x="1285" y="491" fontSize="10" fill="#1515ff">Z</text>
        <text x="1346" y="493" fontSize="12" fill="#e01515">X</text>
      </svg>
      <div className="absolute right-1 top-0 flex w-28 flex-col items-end font-bold text-white">
        <div className="relative flex h-[40px] w-[111px] items-center pt-1 leading-[40px]">
          <T w={31} className="mr-[9px] origin-left scale-x-[1.32] text-[37px] [-webkit-text-stroke:0.8px_white]">Λ</T>
          <T w={79} className="text-[37px]">nsys</T>
          <div className="absolute left-[19px] top-[8px] h-[13px] w-px -rotate-[22deg] bg-[#2a2a2a]" />
        </div>
        <T w={68} className="mt-[2px] text-[18px] leading-[20px]">2024 R2</T>
        <div className="mr-0.5 mt-1 h-0.5 w-[110px] bg-[#aab0b0]" />
        <T w={88} className="mr-[14px] mt-[3px] text-[18px] leading-[20px]">STUDENT</T>
      </div>
    </div>
  );
}

function Metrics() {
  return (
    <div className="flex flex-1 flex-col bg-[#2a2d32] pt-1">
      <PanelHeader title="Mesh Metrics" w={71} max={false} className="pl-[5px]" />
      <div className="flex h-[89px] bg-[#212121]">
        <div className="ml-2.5 mt-[15px] w-[977px]">
          <div className="flex h-6 w-[73px] items-center border-b-2 border-r-2 border-l border-t border-b-[#3c3c3c] border-r-[#3c3c3c] border-l-[#aaa] border-t-[#aaa] bg-[#636363] pl-[11px] text-[12px] text-[#e8e8e8]"><T w={49} className="font-['Liberation_Sans'] text-[13px]">Controls</T></div>
          <svg width="977" height="50" viewBox="358 627 977 50" fill="none">
            <path d="M358 627h977v50H358z" fill="#9f9f9f" />
            <path d="M458.500 680V659.500h853V680" stroke="#000" />
            <path d="M1267.500 627h14v50h-14z" fill="#00aec6" /><path d="M1267.500 627v50M1281.500 627v50" stroke="#000" />
            <path d="M462 668h53" stroke="#1eeab5" strokeWidth="2.500" /><circle cx="488" cy="668" r="3.200" fill="#1eeab5" stroke="#000" />
            <path d="M888 668h53" stroke="#00a8c5" strokeWidth="2.500" /><circle cx="914" cy="668" r="3.200" fill="#00a8c5" stroke="#000" />
            <g fontSize="11.500" fill="#111"><text x="518" y="672" textLength="19">Tri3</text><text x="944" y="672" textLength="34">Quad4</text></g>
          </svg>
        </div>
        <svg width="14" height="89" viewBox="0 0 14 89" fill="none" className="ml-auto">
          <path d="M0 0h14v89H0z" fill="#f0f0f0" /><path d="M1 34h13v16H1z" fill="#cdcdcd" />
          <path d="m3 24 5.500-5.500L14 24M3 65l5.500 5.500L14 65" stroke="#606060" strokeWidth="2.500" />
        </svg>
      </div>
    </div>
  );
}

export default function App() {
  return (
    <div className="flex h-[726px] w-[1359px] flex-col overflow-hidden bg-[#2a2d32] font-['Open_Sans','Noto_Sans',sans-serif] text-[11.5px] leading-4">
      <TitleBar />
      <Ribbon />
      <div className="h-px shrink-0 bg-[#2a2d32]" />
      <div className="flex h-[542px] shrink-0">
        <LeftDock />
        <div className="flex w-[1011px] flex-col">
          <GraphicsBar />
          <Viewport />
          <Metrics />
        </div>
      </div>
      <div className="flex h-[29px] shrink-0 flex-col justify-between text-[#a6a9ad]">
        <div className="mt-1 flex pl-[3px]"><T w={114}>Graphics Annotations</T><T w={32} className="ml-[18px]">Graph</T></div>
        <div className="h-[5px] w-[178px] bg-[#3b3e47]" />
      </div>
      <div className="flex h-5 items-center bg-[#424242] pl-[875px] text-[#f4f4f4]">
        <Ico className="mr-0.5"><path d="M.5 5h14v7.500H6L3.500 15v-2.500h-3z" fill="#ffd94a" /><path d="M6.500 1v6q0 2 1.500 2t1.500-2V1" stroke="#222" strokeWidth="1.300" /><path d="M10.500 2v5" stroke="#ddd" /></Ico>
        <T w={70}>No Messages</T>
        <T w={67} className="ml-[18px]">No Selection</T>
        <svg width="9" height="5" viewBox="0 0 9 5" className="ml-[22px] mr-[5px]"><path d="M.5 4.500h8L4.500 0z" fill="#fff" /></svg>
        <T w={127}>Metric (m, kg, N, s, V, A)</T>
        <T w={42} className="ml-[13px]">Degrees</T>
        <T w={27} className="ml-[12px]">rad/s</T>
        <T w={37} className="ml-[12px]">Celsius</T>
      </div>
    </div>
  );
}
